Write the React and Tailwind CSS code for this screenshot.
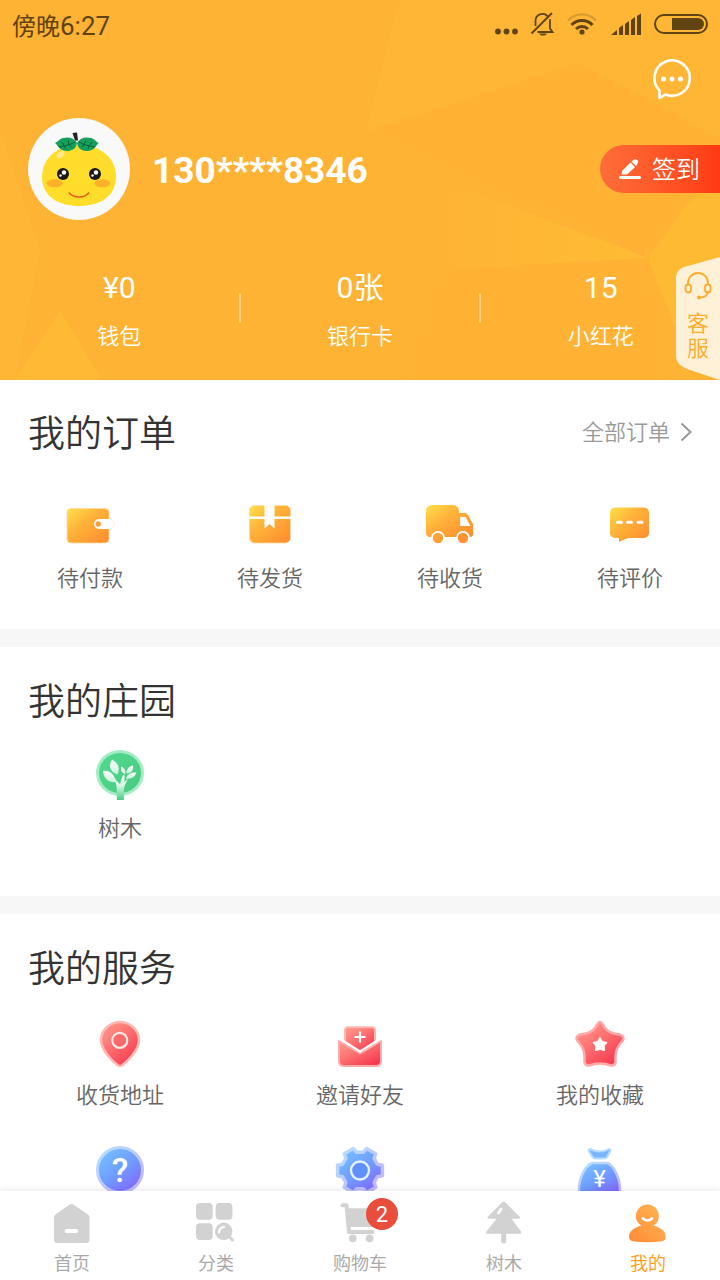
/**
 * "Mine" page of the fruit shop app
 *
 * Sections:
 *  - Profile header with wallet / card / flower counters
 *  - Order shortcuts
 *  - Manor and service shortcuts
 *  - Bottom tab bar
 */
import React from 'react';

/* ---------- Shared gradients, referenced by every icon ---------- */
const Gradients = () => (
  <svg width="0" height="0" className="absolute" aria-hidden="true">
    <defs>
      <linearGradient id="orange" x1="0" y1="0" x2="1" y2="1">
        <stop offset="0" stopColor="#ffe14a" />
        <stop offset="0.4" stopColor="#ffb33a" />
        <stop offset="1" stopColor="#ff8a2e" />
      </linearGradient>
      <linearGradient id="red" x1="0.1" y1="0" x2="0.9" y2="1">
        <stop offset="0" stopColor="#ff9a8e" />
        <stop offset="0.45" stopColor="#fc6f6f" />
        <stop offset="1" stopColor="#f4304a" />
      </linearGradient>
      <linearGradient id="blue" x1="0.1" y1="0" x2="0.9" y2="1">
        <stop offset="0" stopColor="#77c4ff" />
        <stop offset="0.5" stopColor="#6f9dff" />
        <stop offset="1" stopColor="#8560ff" />
      </linearGradient>
      <linearGradient id="blueEdge" x1="0.1" y1="0" x2="0.9" y2="1">
        <stop offset="0" stopColor="#b5defe" />
        <stop offset="1" stopColor="#c3b3ff" />
      </linearGradient>
      <linearGradient id="green" x1="0" y1="0" x2="1" y2="1">
        <stop offset="0" stopColor="#4fdb8e" />
        <stop offset="1" stopColor="#4bc981" />
      </linearGradient>
      <linearGradient id="trunk" x1="0" y1="0" x2="0" y2="1">
        <stop offset="0" stopColor="#ffffff" />
        <stop offset="0.45" stopColor="#d4f5e2" />
        <stop offset="1" stopColor="#42cd80" />
      </linearGradient>
      <linearGradient id="leaf" x1="0" y1="0" x2="0" y2="1">
        <stop offset="0" stopColor="#ffffff" />
        <stop offset="1" stopColor="#c9f3da" />
      </linearGradient>
      <linearGradient id="person" x1="1" y1="0" x2="0" y2="1">
        <stop offset="0" stopColor="#ffb855" />
        <stop offset="1" stopColor="#ff8a35" />
      </linearGradient>
      <linearGradient id="facet" x1="0" y1="0" x2="1" y2="0">
        <stop offset="0" stopColor="#ffb334" />
        <stop offset="1" stopColor="#ffbc34" />
      </linearGradient>
    </defs>
  </svg>
);

/* ---------- Status bar icons ---------- */
const StatusIcons = () => (
  <div className="flex items-center gap-3 pb-1 text-[#5f4310]">
    <svg width="24" height="24" viewBox="0 0 24 24" fill="currentColor">
      <circle cx="4" cy="19.500" r="2.900" />
      <circle cx="12.500" cy="19.500" r="2.900" />
      <circle cx="21" cy="19.500" r="2.900" />
    </svg>
    <svg width="24" height="24" viewBox="0 0 24 24" fill="none" stroke="currentColor" strokeWidth="1.800">
      <path d="M5.500 14V9a7 7 0 0 1 12-5M20 7v9.500l2.500 3.500H7.500M1.500 21.500 22 1" />
      <path d="M9.500 21.500a3.500 2 0 0 0 7 0z" fill="currentColor" stroke="none" />
    </svg>
    <svg width="32" height="24" viewBox="0 0 32 24" fill="none" stroke="currentColor" strokeWidth="3">
      <path d="M2 8.500a19 19 0 0 1 28 0" stroke="#d99a30" strokeWidth="2.400" />
      <path d="M5.500 13a14.500 14.500 0 0 1 21 0M10 17a8.600 8.600 0 0 1 12 0" />
      <circle cx="16" cy="20" r="2.600" fill="currentColor" stroke="none" />
    </svg>
    <svg width="32" height="24" viewBox="0 0 32 24" fill="currentColor">
      <path d="M1 23 7 18v5zM9 16l4-3v10H9zM15 12l4-3v14h-4zM21 8l4-3v18h-4zM27 4l4-2.500V23h-4z" />
    </svg>
    <svg width="54" height="24" viewBox="0 0 54 24">
      <rect x="1" y="3" width="52" height="18" rx="9" fill="none" stroke="currentColor" strokeWidth="2" />
      <path d="M18 6h26a6 6 0 0 1 0 12H18z" fill="currentColor" />
    </svg>
  </div>
);

/* ---------- Header drawings ---------- */
const HeaderBackdrop = () => (
  <svg
    className="absolute inset-0 h-full w-full"
    viewBox="0 0 720 380"
    preserveAspectRatio="none"
    aria-hidden="true"
  >
    <rect width="720" height="380" fill="#ffb334" />
    <path d="M400 0H720V138L577 63L365 132z" fill="#ffb635" />
    <path d="M577 63 720 138V160L648 258L365 132z" fill="#ffb233" />
    <path d="M440 180 648 258 440 270z" fill="url(#facet)" />
    <path d="M720 160 648 258 676 330 720 380z" fill="#ffba34" />
    <path d="M440 270 648 258 670 380H400z" fill="#ffb233" />
    <path d="M0 130 40 250 15 380H0z" fill="#ffb635" />
    <path d="M15 380 60 310 102 380z" fill="#ffb934" />
  </svg>
);

const Avatar = () => (
  <svg className="size-[102px] shrink-0 rounded-full bg-[#f9f9f9]" viewBox="0 0 102 102" role="img" aria-label="头像">
    <path d="M51 27C74 27 88 41 88 59C88 79 71 88 51 88S14 79 14 59C14 41 28 27 51 27z" fill="#ffde2b" />
    <ellipse cx="32.700" cy="36.500" rx="4.500" ry="2.800" fill="#ffe98a" transform="rotate(-38 32.700 36.500)" />
    <path d="M27 25C30 24 31 21 35 20C41 18.500 46 20 49 25C48 31 44 33 39 33C31 33 30 27 27 25z" fill="#16a05c" />
    <path d="M70.700 25C68 24 67 21 63 20C57 18.500 52 20 49 25C50 31 54 33 59 33C67 33 68 27 70.700 25z" fill="#16a05c" />
    <path
      d="M31 29C37 28 42 27 47 24M36 28l-2-4M36 28l2 3M41 26.500l-1-4M41 26.500l3 3M67 29C61 28 55 27 51 24M61 28l3-4M61 28l-1 3M56 26.500l2-4M56 26.500l-2 3"
      fill="none"
      stroke="#0b5a35"
      strokeWidth="0.900"
    />
    <path d="M44.500 15 49 14.500 50 22.500H47z" fill="#222" />
    <ellipse cx="26.700" cy="65.300" rx="8" ry="4" fill="#fdb12b" />
    <ellipse cx="74.300" cy="65.300" rx="8" ry="4" fill="#fdb12b" />
    {[35, 67].map((x) => (
      <g key={x}>
        <circle cx={x} cy="56" r="6" fill="#1d1712" />
        <circle cx={x + 1} cy="54.500" r="2.200" fill="#fff" />
        <circle cx={x - 2.5} cy="57.500" r="1.200" fill="#fff" />
      </g>
    ))}
    <path d="M41 74.500C45 80.500 57 80.500 61 74.500" fill="none" stroke="#f0561d" strokeWidth="1.400" />
  </svg>
);

const MessageIcon = () => (
  <svg className="size-10" viewBox="0 0 40 40" fill="none" stroke="#fff" strokeWidth="2.600" strokeLinejoin="round">
    <path d="M7.500 31.500A17.700 17.700 0 1 1 13.500 35.500L7.500 39z" />
    <g fill="#fff" stroke="none">
      <circle cx="11.500" cy="20" r="2.500" />
      <circle cx="20" cy="20" r="2.500" />
      <circle cx="28.500" cy="20" r="2.500" />
    </g>
  </svg>
);

const SignIcon = () => (
  <svg className="size-6" viewBox="0 0 24 24" fill="#fff">
    <path d="M3.500 16.500 4.500 12.500 12.500 4.500 17 9 9 16.500z" />
    <path d="M13.500 3.500 15.500 1.800c3-2 6 1.500 4 4L18 8z" />
    <rect x="1" y="18" width="22" height="3" rx="1.500" />
  </svg>
);

const HeadsetIcon = () => (
  <svg className="h-[30px] w-7" viewBox="0 0 28 30" fill="none" stroke="#ffab2b" strokeWidth="1.800">
    <path d="M4 13.500V12a10 10 0 0 1 20 0v1.500M24 21c-1 4-4 5.500-8 5.500" />
    <rect x="1.500" y="13.500" width="5.500" height="8" rx="2.700" />
    <rect x="21" y="13.500" width="5.500" height="8" rx="2.700" />
    <circle cx="15" cy="26.500" r="2" fill="#ffab2b" stroke="none" />
  </svg>
);

/* ---------- Shortcut icons, all on a 56 x 56 box ---------- */
const Icon56 = ({ children }) => (
  <svg className="size-14" viewBox="0 0 56 56" aria-hidden="true">
    {children}
  </svg>
);

const WalletIcon = () => (
  <Icon56>
    <rect x="5" y="11.500" width="42" height="34.500" rx="4" fill="url(#orange)" stroke="#ffd9a0" strokeWidth="0.800" />
    <path d="M37 22H48V32H37a5 5 0 0 1 0-10z" fill="#fff" />
    <path d="M47.500 22a4.500 5 0 0 1 0 10" fill="none" stroke="#ffefdd" strokeWidth="1.200" />
    <circle cx="36.200" cy="27" r="2.700" fill="#ffa033" />
  </Icon56>
);

const BoxIcon = () => (
  <Icon56>
    <rect x="7.500" y="8.500" width="41" height="37.500" rx="5" fill="url(#orange)" stroke="#ffd9a0" strokeWidth="0.800" />
    <path d="M7 19.500H49V22H7z" fill="#fff" />
    <path d="M22.500 7.500h10V31.500L27.500 27l-5 4.500z" fill="#fff" />
  </Icon56>
);

const TruckIcon = () => (
  <Icon56>
    <path
      d="M10 8h21a6 6 0 0 1 6 6v2h6q2 0 3 2l5 9v10q0 3-3 3H8q-4 0-4-4V14a6 6 0 0 1 6-6z"
      fill="url(#orange)"
    />
    <path d="M38.200 20H43.500L48.500 29H38.200z" fill="#fff" />
    <circle cx="16" cy="41" r="7" fill="#fff" />
    <circle cx="41" cy="41" r="7" fill="#fff" />
    <circle cx="16" cy="41" r="5.200" fill="#ffa136" />
    <circle cx="41" cy="41" r="5.200" fill="#ff9231" />
  </Icon56>
);

const CommentIcon = () => (
  <Icon56>
    <path
      d="M13 10.500H42a5 5 0 0 1 5 5V36a5 5 0 0 1-5 5H26L17 45V41H13a5 5 0 0 1-5-5V15.500a5 5 0 0 1 5-5z"
      fill="url(#orange)"
    />
    <path d="M15.500 25.300h4M25.500 25.300h4M36 25.300h4" stroke="#fff" strokeWidth="3" strokeLinecap="round" />
  </Icon56>
);

const SaplingIcon = () => (
  <Icon56>
    <ellipse cx="28" cy="26" rx="24" ry="23" fill="#a5ecc5" />
    <ellipse cx="28" cy="26" rx="21" ry="20" fill="url(#green)" />
    <g fill="url(#leaf)">
      <path d="M20 12.500C26 16 28.500 21 25.500 27.500C18 25 16 19 20 12.500z" />
      <path d="M11 24C18 23 23 28 24 35C16 36 11.500 31 11 24z" />
      <path d="M29.500 19.500C32.500 21 34 24 33 27.500C29.500 26 28.500 23 29.500 19.500z" />
      <path d="M41 18.500C42 23 39 26.500 34.500 26.500C34 22.500 37 19 41 18.500z" />
      <path d="M44.500 25.500C43 30 39 32.500 34 31.500C35 27.500 39 25 44.500 25.500z" />
    </g>
    <path d="M24.800 53V43C25 38 23 34 21.500 31L28 37L31 28H32.500V35L36 31.500C34 36 32 39 31.800 43V53z" fill="url(#trunk)" />
  </Icon56>
);

const PinIcon = () => (
  <Icon56>
    <path
      d="M28 8C38 8 47 16 47 26C47 36 35.500 47.500 30 51.500Q28 52.500 26 51.500C20.500 47.500 9 36 9 26C9 16 18 8 28 8z"
      fill="url(#red)"
      stroke="#ffb9b4"
      strokeWidth="2.500"
    />
    <circle cx="27.800" cy="26.300" r="7.500" fill="#f76a6c" stroke="#ffe9e7" strokeWidth="2.200" />
  </Icon56>
);

const InviteIcon = () => (
  <Icon56>
    <path d="M16 13.300H40q3 0 3 3V31L28 40 13 31V16.300q0-3 3-3z" fill="url(#red)" stroke="#ffb5b0" strokeWidth="2" />
    <path d="M28 17.500v11M22.500 23h11" stroke="#fff" strokeWidth="2.200" />
    <path
      d="M7 27 28 39.500 49 27V47q0 5-5 5H12q-5 0-5-5z"
      fill="url(#red)"
      stroke="#ffadab"
      strokeWidth="2"
      strokeLinejoin="round"
    />
    <path d="M10.500 26.500 28 37.500 45.500 26.500" fill="none" stroke="#fff" strokeWidth="2.200" />
  </Icon56>
);

const FavoriteIcon = () => (
  <Icon56>
    <path
      d="M25.500 10Q28 6 30.500 10C34 17 38 19 48 20.500Q54 23 50 27.500C45 33 43 37 43.500 48Q43 52 39 51.500C31 48.500 25 48.500 17 51.500Q13 52 12.500 48C13 37 11 33 6 27.500Q2 23 8 20.500C18 19 22 17 25.500 10z"
      fill="url(#red)"
      stroke="#ffa9a8"
      strokeWidth="2.500"
    />
    <path
      d="M28 23.500 30.500 27.500 35 28.500 32.200 32 32.500 36.500 28 35.500 23.500 36.500 23.800 32 21 28.500 25.500 27.500z"
      fill="#fff"
      stroke="#fff"
      strokeWidth="1"
      strokeLinejoin="round"
    />
  </Icon56>
);

const HelpIcon = () => (
  <Icon56>
    <circle cx="28" cy="30" r="22.500" fill="url(#blue)" stroke="url(#blueEdge)" strokeWidth="3" />
    <text x="28" y="42" textAnchor="middle" fill="#fff" className="font-[Roboto] text-[34px] font-medium">
      ?
    </text>
  </Icon56>
);

// Outline of a six-tooth gear around the given centre
const gearPath = (cx, cy, outer, inner) => {
  const points = [];
  for (let tooth = 0; tooth < 6; tooth += 1) {
    [[-20, inner], [-13, outer], [13, outer], [20, inner]].forEach(([shift, radius]) => {
      const angle = ((tooth * 60 + shift) * Math.PI) / 180;
      points.push(`${cx + radius * Math.cos(angle)} ${cy + radius * Math.sin(angle)}`);
    });
  }
  return `M${points.join('L')}z`;
};

const SettingsIcon = () => (
  <Icon56>
    <path
      d={gearPath(28, 30.5, 23, 18.5)}
      fill="url(#blue)"
      stroke="url(#blueEdge)"
      strokeWidth="3.500"
      strokeLinejoin="round"
    />
    <circle cx="28" cy="30.500" r="9" fill="#5f90fb" stroke="#e3f0ff" strokeWidth="2.400" />
  </Icon56>
);

const MoneyBagIcon = () => (
  <Icon56>
    <path
      d="M18 9Q23 11.500 28 11.500T37 9Q39 9 38 11.500L35 17Q34 18.500 32 18.500H23.500Q21.500 18.500 20.500 17L17 11.500Q16 9 18 9z"
      fill="#77b6ff"
      stroke="#b5dcff"
      strokeWidth="2"
    />
    <path
      d="M20 23H35.500C42 26 48 38 48 50Q48 55 43 55H12Q7 55 7 50C7 38 13 26 20 23z"
      fill="url(#blue)"
      stroke="url(#blueEdge)"
      strokeWidth="2.500"
    />
    <text x="27.500" y="47" textAnchor="middle" fill="#fff" className="font-[Roboto] text-[24px] font-normal">
      ¥
    </text>
  </Icon56>
);

/* ---------- Tab bar icons, all on a 44 x 44 box ---------- */
const Icon44 = ({ children }) => (
  <svg className="size-11" viewBox="0 0 44 44" fill="#d2d2d2" aria-hidden="true">
    {children}
  </svg>
);

const HomeTab = () => (
  <Icon44>
    <path d="M19 4Q21.500 2 24 4L38 13.500Q39.500 14.500 39.500 16.500V38.500Q39.500 42 36 42H7.500Q4 42 4 38.500V16.500Q4 14.500 5.500 13.500z" />
    <rect x="14.700" y="28" width="13.500" height="4" rx="2" fill="#fff" />
  </Icon44>
);

const CategoryTab = () => (
  <Icon44>
    <rect x="2" y="2" width="16.700" height="16.700" rx="4" />
    <rect x="21.700" y="2" width="16.700" height="16.700" rx="4" />
    <rect x="2" y="22.200" width="16.700" height="16.700" rx="4" />
    <circle cx="29.700" cy="30.300" r="8.700" />
    <path d="M35 35.500 38.500 39" stroke="#d2d2d2" strokeWidth="3" strokeLinecap="round" />
    <path d="M25 31.500A5 5 0 0 1 30 26" fill="none" stroke="#fff" strokeWidth="2.200" strokeLinecap="round" />
  </Icon44>
);

const CartTab = () => (
  <Icon44>
    <path
      d="M4.500 4.200H8.500L11 31H34.500"
      fill="none"
      stroke="#d2d2d2"
      strokeWidth="4"
      strokeLinecap="round"
      strokeLinejoin="round"
    />
    <path d="M9 7.300H42L37 26H11.500z" />
    <path d="M14.500 27.200H35" stroke="#fff" strokeWidth="2.200" />
    <circle cx="14.800" cy="37.400" r="3.800" />
    <circle cx="31.600" cy="37.400" r="3.800" />
  </Icon44>
);

const TreeTab = () => (
  <Icon44>
    <path d="M20 1.500Q21.700 0 23.500 1.500L37.500 15.500Q39 17.500 36.500 17.700H29.500L39 30.500Q40 32.500 38 32.700H24.200V40A2.500 2.500 0 0 1 19.200 40V32.700H5.500Q3.200 32.500 4.500 30.500L14.500 17.700H7Q4.500 17.500 6 15.500z" />
    <path d="M16.500 12 19 8" stroke="#fff" strokeWidth="2.800" strokeLinecap="round" />
  </Icon44>
);

const MineTab = () => (
  <Icon44>
    <path
      d="M21.300 3.500A11.500 11.500 0 0 1 27.500 24.800C34 26 39.700 30 39.700 35.500Q39.700 40 35 40.500Q21.300 42 8 40.500Q3 40 3 35.500C3 30 9 26 15.300 24.800A11.500 11.500 0 0 1 21.300 3.500z"
      fill="url(#person)"
    />
    <path d="M16.800 17.500Q21.500 21.500 26 17.500" fill="none" stroke="#fff" strokeWidth="2.600" strokeLinecap="round" />
  </Icon44>
);

/* ---------- Data ---------- */
const stats = [
  { value: '¥0', label: '钱包' },
  { value: '0张', label: '银行卡' },
  { value: '15', label: '小红花' },
];

const orders = [
  { label: '待付款', icon: WalletIcon },
  { label: '待发货', icon: BoxIcon },
  { label: '待收货', icon: TruckIcon },
  { label: '待评价', icon: CommentIcon },
];

const manor = [{ label: '树木', icon: SaplingIcon }];

const services = [
  { label: '收货地址', icon: PinIcon },
  { label: '邀请好友', icon: InviteIcon },
  { label: '我的收藏', icon: FavoriteIcon },
  { label: '帮助中心', icon: HelpIcon },
  { label: '设置', icon: SettingsIcon },
  { label: '我的佣金', icon: MoneyBagIcon },
];

const tabs = [
  { label: '首页', icon: HomeTab },
  { label: '分类', icon: CategoryTab },
  { label: '购物车', icon: CartTab, badge: 2 },
  { label: '树木', icon: TreeTab },
  { label: '我的', icon: MineTab, active: true },
];

/* ---------- Building blocks ---------- */
const Shortcut = ({ label, icon: Icon }) => (
  <button type="button" className="flex flex-col items-center gap-2.5 text-[22px] leading-8 text-[#666]">
    <Icon />
    {label}
  </button>
);

const SectionTitle = ({ children }) => (
  <h2 className="text-[37px] leading-[54px] font-[350] text-[#333]">{children}</h2>
);

const ProfileHeader = () => (
  <header className="relative text-white">
    <HeaderBackdrop />
    <div className="relative">
      <div className="flex h-[52px] items-center justify-between px-3">
        <p className="text-2xl font-normal text-[#5f4310]">
          傍晚<span className="text-[26px]">6:27</span>
        </p>
        <StatusIcons />
      </div>

      <div className="flex justify-end px-7 pt-[7px]">
        <button type="button" aria-label="消息">
          <MessageIcon />
        </button>
      </div>

      {/* Avatar, phone number, daily sign-in */}
      <div className="mt-[19px] flex items-center pl-7">
        <Avatar />
        <h1 className="ml-[22px] flex-1 pt-1 text-[37px] font-bold">130****8346</h1>
        <button
          type="button"
          className="flex h-12 w-[120px] items-center gap-2.5 rounded-l-full bg-linear-to-r from-[#ff6d38] to-[#ff3913] pt-0.5 pl-[18px] text-2xl"
        >
          <SignIcon />
          签到
        </button>
      </div>

      <div className="flex pt-[50px] pb-7">
        {stats.map(({ value, label }, index) => (
          <React.Fragment key={label}>
            {index > 0 && <span className="mt-6 h-7 w-0.5 bg-white/40" />}
            <a href="#" className="flex flex-1 flex-col items-center gap-4">
              <span className="text-[30px] leading-9 font-normal">{value}</span>
              <span className="text-[22px] leading-[30px]">{label}</span>
            </a>
          </React.Fragment>
        ))}
      </div>
    </div>

    {/* Customer service tag hanging on the right edge */}
    <button
      type="button"
      className="absolute right-0 bottom-0 flex h-[123px] w-11 flex-col items-center pt-3.5 text-[22px] leading-[25px] text-[#ffab2b]"
    >
      <svg className="absolute inset-0 h-full w-full" viewBox="0 0 44 123" aria-hidden="true">
        <path d="M44 0V123L11 112Q0 107 0 100V20Q0 12 10 9.500z" fill="#fff0d8" />
      </svg>
      <span className="relative">
        <HeadsetIcon />
      </span>
      <span className="relative mt-2.5 w-[22px]">客服</span>
    </button>
  </header>
);

const TabBar = () => (
  <nav className="relative grid grid-cols-5 bg-white pt-2.5 pb-1 shadow-[0_-2px_6px_rgba(0,0,0,0.08)]">
    {tabs.map(({ label, icon: Icon, badge, active }) => (
      <a
        key={label}
        href="#"
        className={`flex flex-col items-center gap-[7px] text-lg leading-6 ${active ? 'text-[#ff9f1c]' : 'text-[#aaa]'}`}
      >
        <span className="relative">
          <Icon />
          {badge && (
            <span className="absolute -top-[3px] left-7 flex size-8 items-center justify-center rounded-full bg-[#e94e3d] pt-0.5 text-[22px] font-normal text-white">
              {badge}
            </span>
          )}
        </span>
        {label}
      </a>
    ))}
  </nav>
);

const App = () => (
  <div className="flex h-screen flex-col bg-white font-[Roboto,'Noto_Sans_CJK_SC',sans-serif]">
    <Gradients />
    <main className="min-h-0 flex-1 overflow-y-auto font-[350] [scrollbar-width:none]">
      <ProfileHeader />

      <div className="space-y-[18px] bg-[#f7f7f7]">
        <section className="bg-white pt-7 pb-[34px]">
          <div className="flex items-center justify-between px-7">
            <SectionTitle>我的订单</SectionTitle>
            <a href="#" className="flex items-center gap-2.5 pb-1.5 text-[22px] text-[#999]">
              全部订单
              <svg className="h-5 w-3" viewBox="0 0 12 20" fill="none" stroke="#999" strokeWidth="2">
                <path d="M1.500 1.500 10.500 10l-9 8.500" />
              </svg>
            </a>
          </div>
          <div className="mt-[35px] grid grid-cols-4">
            {orders.map((item) => (
              <Shortcut key={item.label} {...item} />
            ))}
          </div>
        </section>

        <section className="bg-white pt-[29px] pb-[51px]">
          <div className="px-7">
            <SectionTitle>我的庄园</SectionTitle>
          </div>
          <div className="mt-[17px] grid grid-cols-3">
            {manor.map((item) => (
              <Shortcut key={item.label} {...item} />
            ))}
          </div>
        </section>

        <section className="bg-white pt-[29px] pb-9">
          <div className="px-7">
            <SectionTitle>我的服务</SectionTitle>
          </div>
          <div className="mt-[17px] grid grid-cols-3 gap-y-7">
            {services.map((item) => (
              <Shortcut key={item.label} {...item} />
            ))}
          </div>
        </section>
      </div>
    </main>
    <TabBar />
  </div>
);

export default App;
